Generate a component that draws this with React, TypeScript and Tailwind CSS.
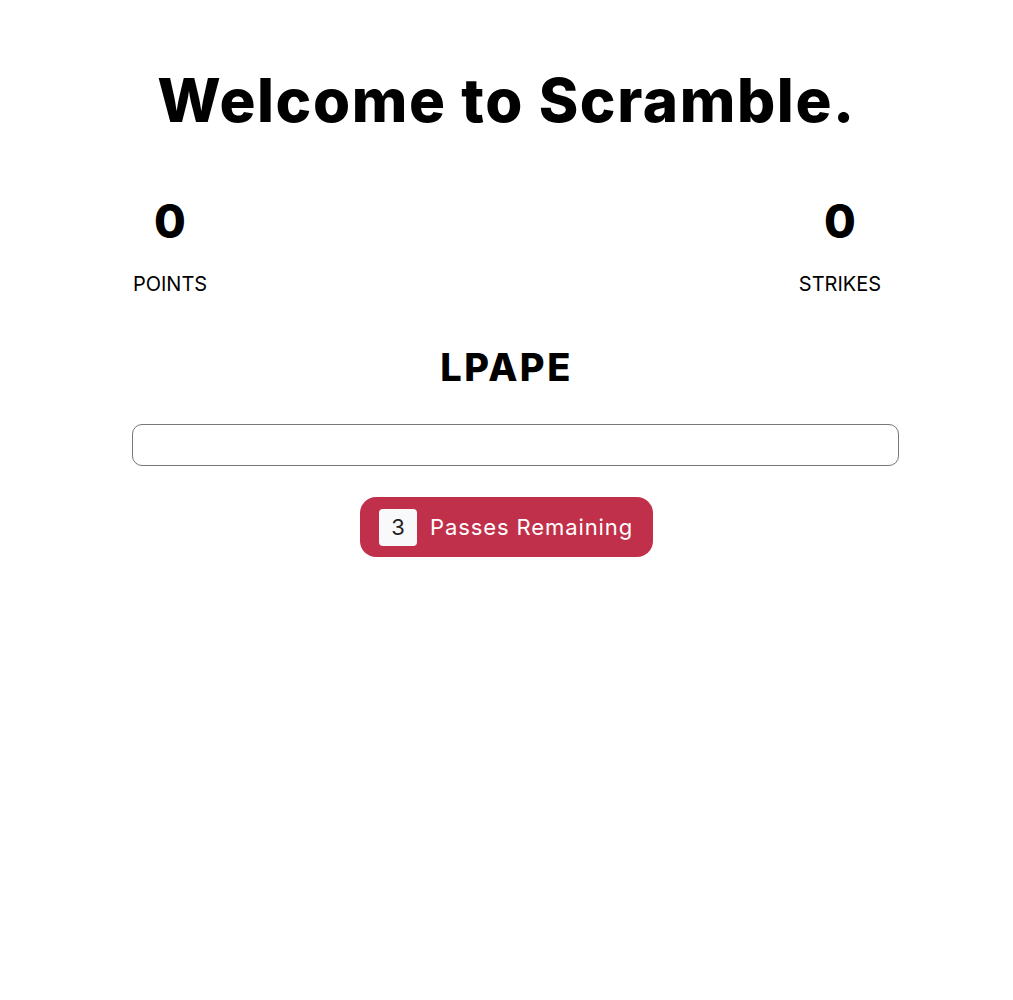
import React from "react";

export default function App() {
  return (
    <div className="min-h-[1000px] bg-white text-black" style={{ fontFamily: "Inter, 'Noto Sans', sans-serif" }}>
      <div className="w-[749px] mx-auto pt-[62px]">
        <h1 className="text-center text-[60px] leading-[76px] font-extrabold tracking-[1.6px]">Welcome to Scramble.</h1>
        <div className="mt-[55px] flex justify-between">
          <div className="flex flex-col items-center w-[76px]">
            <div className="text-[46px] leading-[56px] font-extrabold">0</div>
            <div className="mt-[22px] text-[20px] leading-[26px]">POINTS</div>
          </div>
          <div className="flex flex-col items-center w-[82px]">
            <div className="text-[46px] leading-[56px] font-extrabold">0</div>
            <div className="mt-[22px] text-[20px] leading-[26px]">STRIKES</div>
          </div>
        </div>
        <div className="mt-[47px] text-center text-[38px] leading-[46px] font-extrabold tracking-[2.5px]">LPAPE</div>
        <input
          type="text"
          className="mt-[34px] block w-[767px] h-[42px] border border-[#777] rounded-[10px] outline-none px-3"
        />
        <div className="mt-[31px] flex justify-center">
          <button className="h-[60px] w-[293px] rounded-[16px] bg-[#c1304a] flex items-center pl-[19px] gap-[13px]">
            <span className="w-[38px] h-[37px] rounded-[4px] bg-[#f8f9fa] text-[#222] text-[22px] flex items-center justify-center">3</span>
            <span className="text-white text-[22px] tracking-[0.9px]">Passes Remaining</span>
          </button>
        </div>
      </div>
    </div>
  );
}
